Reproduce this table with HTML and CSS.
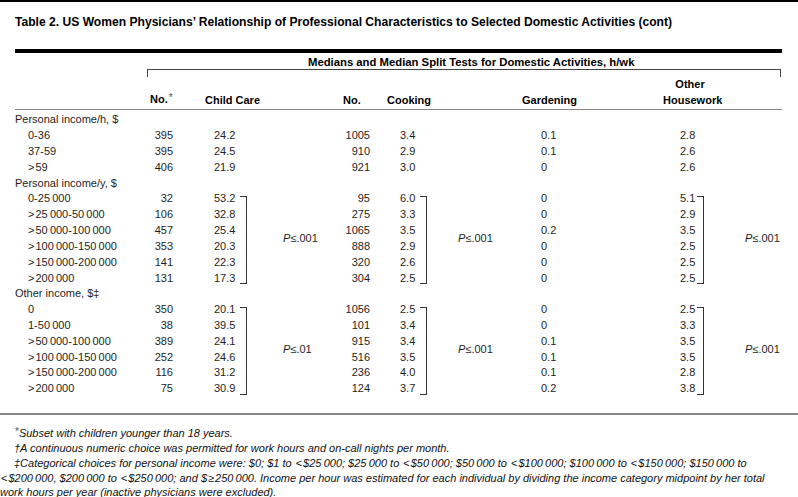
FILE: index.html
```html
<!DOCTYPE html>
<html lang="en">
<head>
<meta charset="utf-8">
<title>Table 2</title>
<link rel="stylesheet" href="styles.css">
</head>
<body>
<div class="page">
  <h1 class="title">Table 2. US Women Physicians’ Relationship of Professional Characteristics to Selected Domestic Activities (cont)</h1>
  <div class="table-wrap">
    <div class="span-title">Medians and Median Split Tests for Domestic Activities, h/wk</div>
    <div class="span-rule"></div>
    <div class="col-heads">
      <div></div>
      <div>No.<span class="ast">*</span></div>
      <div>Child Care</div>
      <div>No.</div>
      <div>Cooking</div>
      <div>Gardening</div>
      <div class="house">Other<br>Housework</div>
      <div></div>
    </div>
    <table class="data">
      <colgroup>
        <col class="w-label"><col class="w-no"><col class="w-v1"><col class="w-b1"><col class="w-p1"><col class="w-no2"><col class="w-v2"><col class="w-b2"><col class="w-p2"><col class="w-gard"><col class="w-v3"><col class="w-b3"><col class="w-p3">
      </colgroup>
      <tbody>
        <tr><td class="grp" colspan="13">Personal income/h, $</td></tr>
        <tr><td class="lab">0-36</td><td class="no">395</td><td class="v1">24.2</td><td></td><td></td><td class="no2">1005</td><td class="v2">3.4</td><td></td><td></td><td class="gard">0.1</td><td class="v3">2.8</td><td></td><td></td></tr>
        <tr><td class="lab">37-59</td><td class="no">395</td><td class="v1">24.5</td><td></td><td></td><td class="no2">910</td><td class="v2">2.9</td><td></td><td></td><td class="gard">0.1</td><td class="v3">2.6</td><td></td><td></td></tr>
        <tr><td class="lab"><span class="gt">&gt;</span>59</td><td class="no">406</td><td class="v1">21.9</td><td></td><td></td><td class="no2">921</td><td class="v2">3.0</td><td></td><td></td><td class="gard">0</td><td class="v3">2.6</td><td></td><td></td></tr>

        <tr><td class="grp" colspan="13">Personal income/y, $</td></tr>
        <tr><td class="lab">0-25&thinsp;000</td><td class="no">32</td><td class="v1">53.2</td><td class="brc" rowspan="6"><div class="brk"></div></td><td class="pc p1" rowspan="6"><i>P</i>≤.001</td><td class="no2">95</td><td class="v2">6.0</td><td class="brc" rowspan="6"><div class="brk"></div></td><td class="pc p2" rowspan="6"><i>P</i>≤.001</td><td class="gard">0</td><td class="v3">5.1</td><td class="brc" rowspan="6"><div class="brk"></div></td><td class="pc p3" rowspan="6"><i>P</i>≤.001</td></tr>
        <tr><td class="lab"><span class="gt">&gt;</span>25&thinsp;000-50&thinsp;000</td><td class="no">106</td><td class="v1">32.8</td><td class="no2">275</td><td class="v2">3.3</td><td class="gard">0</td><td class="v3">2.9</td></tr>
        <tr><td class="lab"><span class="gt">&gt;</span>50&thinsp;000-100&thinsp;000</td><td class="no">457</td><td class="v1">25.4</td><td class="no2">1065</td><td class="v2">3.5</td><td class="gard">0.2</td><td class="v3">3.5</td></tr>
        <tr><td class="lab"><span class="gt">&gt;</span>100&thinsp;000-150&thinsp;000</td><td class="no">353</td><td class="v1">20.3</td><td class="no2">888</td><td class="v2">2.9</td><td class="gard">0</td><td class="v3">2.5</td></tr>
        <tr><td class="lab"><span class="gt">&gt;</span>150&thinsp;000-200&thinsp;000</td><td class="no">141</td><td class="v1">22.3</td><td class="no2">320</td><td class="v2">2.6</td><td class="gard">0</td><td class="v3">2.5</td></tr>
        <tr><td class="lab"><span class="gt">&gt;</span>200&thinsp;000</td><td class="no">131</td><td class="v1">17.3</td><td class="no2">304</td><td class="v2">2.5</td><td class="gard">0</td><td class="v3">2.5</td></tr>

        <tr><td class="grp" colspan="13">Other income, $‡</td></tr>
        <tr><td class="lab">0</td><td class="no">350</td><td class="v1">20.1</td><td class="brc" rowspan="6"><div class="brk"></div></td><td class="pc p1" rowspan="6"><i>P</i>≤.01</td><td class="no2">1056</td><td class="v2">2.5</td><td class="brc" rowspan="6"><div class="brk"></div></td><td class="pc p2" rowspan="6"><i>P</i>≤.001</td><td class="gard">0</td><td class="v3">2.5</td><td class="brc" rowspan="6"><div class="brk"></div></td><td class="pc p3" rowspan="6"><i>P</i>≤.001</td></tr>
        <tr><td class="lab">1-50&thinsp;000</td><td class="no">38</td><td class="v1">39.5</td><td class="no2">101</td><td class="v2">3.4</td><td class="gard">0</td><td class="v3">3.3</td></tr>
        <tr><td class="lab"><span class="gt">&gt;</span>50&thinsp;000-100&thinsp;000</td><td class="no">389</td><td class="v1">24.1</td><td class="no2">915</td><td class="v2">3.4</td><td class="gard">0.1</td><td class="v3">3.5</td></tr>
        <tr><td class="lab"><span class="gt">&gt;</span>100&thinsp;000-150&thinsp;000</td><td class="no">252</td><td class="v1">24.6</td><td class="no2">516</td><td class="v2">3.5</td><td class="gard">0.1</td><td class="v3">3.5</td></tr>
        <tr><td class="lab"><span class="gt">&gt;</span>150&thinsp;000-200&thinsp;000</td><td class="no">116</td><td class="v1">31.2</td><td class="no2">236</td><td class="v2">4.0</td><td class="gard">0.1</td><td class="v3">2.8</td></tr>
        <tr><td class="lab"><span class="gt">&gt;</span>200&thinsp;000</td><td class="no">75</td><td class="v1">30.9</td><td class="no2">124</td><td class="v2">3.7</td><td class="gard">0.2</td><td class="v3">3.8</td></tr>
      </tbody>
    </table>
  </div>
  <div class="bottom-rule"></div>
  <div class="notes">
    <p><span class="ast">*</span>Subset with children younger than 18 years.</p>
    <p>†A continuous numeric choice was permitted for work hours and on-call nights per month.</p>
    <p>‡Categorical choices for personal income were: $0; $1 to <span class="sym">&lt;</span>$25&thinsp;000; $25&thinsp;000 to <span class="sym">&lt;</span>$50&thinsp;000; $50&thinsp;000 to <span class="sym">&lt;</span>$100&thinsp;000; $100&thinsp;000 to <span class="sym">&lt;</span>$150&thinsp;000; $150&thinsp;000 to<br><span class="sym">&lt;</span>$200&thinsp;000, $200&thinsp;000 to <span class="sym">&lt;</span>$250&thinsp;000; and $<span class="sym">≥</span>250&thinsp;000. Income per hour was estimated for each individual by dividing the income category midpoint by her total<br>work hours per year (inactive physicians were excluded).</p>
  </div>
</div>
</body>
</html>
```

FILE: styles.css
```css
* { box-sizing: border-box; }
html, body { margin: 0; padding: 0; background: #fff; }
body {
  width: 798px;
  height: 497px;
  overflow: hidden;
  font-family: "Liberation Sans", Arial, sans-serif;
  color: #1e1e1e;
}
.page { border-top: 2px solid #000; }

.title {
  margin: 0;
  padding: 12px 0 0 15px;
  font-size: 12.1px;
  line-height: 16px;
  font-weight: bold;
  color: #000;
  white-space: nowrap;
}

.table-wrap {
  margin: 19px 16px 0 15px;
  border-top: 4px solid #000;
}

.span-title {
  margin-top: 2px;
  padding-left: 293px;
  font-size: 11.3px;
  line-height: 14px;
  font-weight: bold;
  color: #000;
  white-space: nowrap;
}

.span-rule {
  margin-left: 132px;
  margin-right: 1px;
  height: 8px;
  border: 1px solid #444;
  border-bottom: none;
}

.col-heads {
  display: grid;
  grid-template-columns: 135px 55px 138px 44px 135px 141px 54px 65px;
  align-items: end;
  margin-top: -1px;
  padding-bottom: 1px;
  border-bottom: 1px solid #888;
  font-size: 11px;
  line-height: 16px;
  font-weight: bold;
  color: #000;
  white-space: nowrap;
}
.col-heads .house { text-align: center; }
.ast { font-weight: normal; font-style: normal; color: #555; position: relative; top: -2px; font-size: 10px; margin-left: 1px; }

.data {
  width: 767px;
  margin-top: 2px;
  table-layout: fixed;
  border-collapse: collapse;
  font-size: 11px;
}
.w-label { width: 115px; }
.w-no { width: 45px; }
.w-v1 { width: 65px; }
.w-b1 { width: 8px; }
.w-p1 { width: 82px; }
.w-no2 { width: 42px; }
.w-v2 { width: 48px; }
.w-b2 { width: 9px; }
.w-p2 { width: 112px; }
.w-gard { width: 139px; }
.w-v3 { width: 17px; }
.w-b3 { width: 8px; }
.w-p3 { width: 77px; }

.data tr { height: 15.82px; }
.data td {
  padding: 0;
  line-height: 15px;
  white-space: nowrap;
  vertical-align: middle;
}
.data .grp { padding-left: 0; }
.data .lab { padding-left: 13px; }
.data .no { text-align: right; padding-right: 2px; }
.data .v1 { padding-left: 39px; }
.data .no2 { text-align: right; padding-right: 2px; }
.data .v2 { padding-left: 28px; }
.data .gard { padding-left: 0; }
.data .v3 { padding-left: 0; }
.gt { margin-right: 1px; }

.data .brc { vertical-align: top; }
.brk {
  width: 7px;
  height: 88px;
  margin-top: 5px;
  border: 1px solid #333;
  border-left: none;
}
.data .pc { vertical-align: middle; }
.data .p1 { padding-left: 35px; }
.data .p2 { padding-left: 29px; }
.data .p3 { padding-left: 40px; }

.bottom-rule {
  margin-top: 16px;
  border-top: 2px solid #888;
}

.notes {
  margin-top: 11px;
  font-size: 11px;
  line-height: 14.7px;
  font-style: italic;
  color: #111;
}
.notes p {
  margin: 0;
  text-indent: 14px;
  white-space: nowrap;
}
.sym { font-style: normal; margin: 0 1px; }
```
